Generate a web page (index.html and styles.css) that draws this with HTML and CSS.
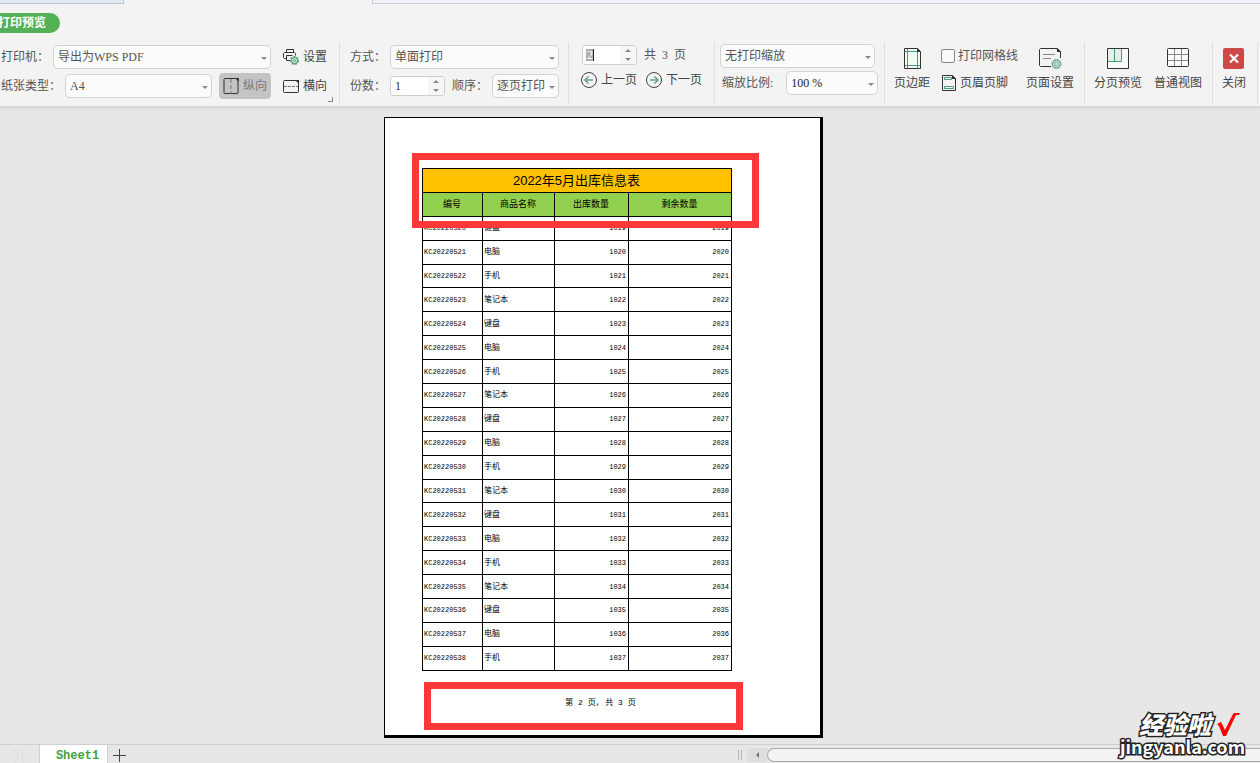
FILE: index.html
```html
<!DOCTYPE html>
<html lang="zh-CN">
<head>
<meta charset="utf-8">
<title>打印预览</title>
<link rel="stylesheet" href="styles.css">
</head>
<body>
<div class="app">
  <header class="top">
    <div class="doc-tabs"><span class="doc-tab"></span><span class="doc-tab-active"></span><span class="doc-rest"></span></div>
    <h1 class="pill">打印预览</h1>
    <div class="toolbar">
      <section class="group printer">
        <div class="rows">
          <div class="row">
            <label class="caption" for="printer">打印机：</label>
            <span class="select grow"><select id="printer"><option>导出为WPS PDF</option></select></span>
          </div>
          <div class="row">
            <label class="caption" for="paper">纸张类型：</label>
            <span class="select grow"><select id="paper"><option>A4</option></select></span>
            <button class="tool pressed" type="button">
              <svg class="i16" viewBox="0 0 16 16"><rect x="1" y=".5" width="14" height="15" rx="1" fill="none" stroke="#333"/><path d="M12 0h4v4z" fill="#333"/><path d="M8 1v15" stroke="#777" stroke-dasharray="4 2"/></svg>纵向</button>
          </div>
        </div>
        <div class="rows">
          <button class="tool line" type="button">
            <svg class="i16" viewBox="0 0 16 16"><path d="M3.500 3.500V.5h7v3M3.500 9.500h-2l-1-1v-4l1-1h10l1 1v2M3.500 6.500h6M3.500 6.500v5h4" fill="none" stroke="#333"/><g stroke="#4f9b70" fill="#d9ebe0"><circle cx="11.500" cy="11.500" r="3.500" stroke-dasharray="2 1" stroke-width="2"/><circle cx="11.500" cy="11.500" r="3"/><circle cx="11.500" cy="11.500" r="1"/></g></svg>设置</button>
          <button class="tool line" type="button">
            <svg class="i16" viewBox="0 0 16 16"><rect x=".5" y="2.500" width="15" height="12" rx="1" fill="none" stroke="#333"/><path d="M12 2h4v4z" fill="#333"/><path d="M1 8.500h14" stroke="#777" stroke-dasharray="3 1"/></svg>横向</button>
        </div>
        <span class="corner"></span>
      </section>

      <section class="group mode">
        <div class="rows">
          <div class="row">
            <label class="caption" for="side">方式：</label>
            <span class="select grow"><select id="side"><option>单面打印</option></select></span>
          </div>
          <div class="row">
            <label class="caption" for="copies">份数：</label>
            <span class="spin"><input id="copies" type="text" value="1"><span class="steps"><button type="button" aria-label="增加"></button><button class="down" type="button" aria-label="减少"></button></span></span>
            <label class="caption order" for="order">顺序：</label>
            <span class="select grow"><select id="order"><option>逐页打印</option></select></span>
          </div>
        </div>
      </section>

      <section class="group pager">
        <div class="rows tight">
          <div class="row page-row">
            <span class="spin current"><input id="page" type="text" value="2" aria-label="页码"><span class="steps"><button type="button" aria-label="增加"></button><button class="down" type="button" aria-label="减少"></button></span></span>
            <span class="total"><span>共</span><span>3</span><span>页</span></span>
          </div>
          <div class="row nav-row">
            <button class="tool nav" type="button"><svg class="i18" viewBox="0 0 18 18"><circle cx="9" cy="9" r="7.500" fill="none" stroke="#444"/><path d="M13 9H5M8.500 5.500L5 9l3.500 3.500" fill="none" stroke="#65a582" stroke-width="1.500"/></svg>上一页</button>
            <button class="tool nav" type="button"><svg class="i18" viewBox="0 0 18 18"><circle cx="9" cy="9" r="7.500" fill="none" stroke="#444"/><path d="M5 9h8M9.500 5.500L13 9l-3.500 3.500" fill="none" stroke="#65a582" stroke-width="1.500"/></svg>下一页</button>
          </div>
        </div>
      </section>

      <section class="group zoom">
        <div class="rows tight">
          <div class="row"><span class="select fit"><select aria-label="打印缩放"><option>无打印缩放</option></select></span></div>
          <div class="row">
            <label class="caption" for="ratio">缩放比例:</label>
            <span class="select grow ratio"><select id="ratio"><option>100 %</option></select></span>
          </div>
        </div>
      </section>

      <section class="group setup">
        <button class="big" type="button"><svg class="i24" viewBox="0 0 24 24"><path d="M4.500 1.500h13l3 3v17h-16z" fill="#f4faf6" stroke="#333"/><path d="M17 1v4h4z" fill="#333"/><path d="M7.500 2v19M17.500 5v16M5 4.500h12M5 18.500h15" stroke="#4f9b70"/></svg>页边距</button>
        <div class="rows checks">
          <label class="check"><input type="checkbox">打印网格线</label>
          <button class="tool header-btn" type="button"><svg class="i16" viewBox="0 0 16 16"><path d="M1.500.5h10l3 3v12h-13z" fill="none" stroke="#333"/><path d="M11 0v4h4z" fill="#333"/><path d="M3.500 2.500h7v2h-7zM3.500 11.500h9v2h-9z" fill="none" stroke="#4f9b70"/></svg>页眉页脚</button>
        </div>
        <button class="big" type="button"><svg class="i24" viewBox="0 0 24 24"><path d="M13 19.500H2.500l-1-1v-16l1-1h17l3 3V11" fill="none" stroke="#333"/><path d="M19 1v4h4z" fill="#333"/><path d="M5 7.500h12M5 11.500h8" stroke="#888"/><g fill="#d9ebe0" stroke="#65a582"><circle cx="18.500" cy="17" r="4.500" stroke-dasharray="2.500 1"/><circle cx="18.500" cy="17" r="4"/><circle cx="18.500" cy="17" r="2"/></g></svg>页面设置</button>
      </section>

      <section class="group views">
        <button class="big" type="button"><svg class="i24" viewBox="0 0 24 24"><path d="M1.500 1.500h21v20h-21z" fill="#fafafa" stroke="#333"/><path d="M2 2h14v12.500H2z" fill="#e5eee8"/><path d="M8.500 2v12M2 14.500h13.500V2" fill="none" stroke="#4f9b70"/></svg>分页预览</button>
        <button class="big" type="button"><svg class="i24" viewBox="0 0 24 24"><rect x="1.500" y="1.500" width="21" height="18" rx="1" fill="#fafafa" stroke="#333"/><path d="M8.500 2v17M15.500 2v17M2 7.500h20M2 13.500h20" stroke="#888"/></svg>普通视图</button>
      </section>

      <section class="group close">
        <button class="big" type="button"><svg class="i24" viewBox="0 0 24 24"><rect x="1" y="1" width="21" height="21" rx="2" fill="#cf4848"/><path d="M8 7.500l8 8M16 7.500l-8 8" stroke="#fff" stroke-width="2.200"/></svg>关闭</button>
      </section>
    </div>
  </header>

  <main class="stage">
    <article class="paper">
      <table class="sheet">
        <colgroup><col class="c1"><col class="c2"><col class="c3"><col class="c4"></colgroup>
        <tbody>
          <tr class="title"><th colspan="4">2022年5月出库信息表</th></tr>
          <tr class="head"><th>编号</th><th>商品名称</th><th>出库数量</th><th>剩余数量</th></tr>
          <tr><td>KC20220520</td><td>键盘</td><td>1019</td><td>2019</td></tr>
          <tr><td>KC20220521</td><td>电脑</td><td>1020</td><td>2020</td></tr>
          <tr><td>KC20220522</td><td>手机</td><td>1021</td><td>2021</td></tr>
          <tr><td>KC20220523</td><td>笔记本</td><td>1022</td><td>2022</td></tr>
          <tr><td>KC20220524</td><td>键盘</td><td>1023</td><td>2023</td></tr>
          <tr><td>KC20220525</td><td>电脑</td><td>1024</td><td>2024</td></tr>
          <tr><td>KC20220526</td><td>手机</td><td>1025</td><td>2025</td></tr>
          <tr><td>KC20220527</td><td>笔记本</td><td>1026</td><td>2026</td></tr>
          <tr><td>KC20220528</td><td>键盘</td><td>1027</td><td>2027</td></tr>
          <tr><td>KC20220529</td><td>电脑</td><td>1028</td><td>2028</td></tr>
          <tr><td>KC20220530</td><td>手机</td><td>1029</td><td>2029</td></tr>
          <tr><td>KC20220531</td><td>笔记本</td><td>1030</td><td>2030</td></tr>
          <tr><td>KC20220532</td><td>键盘</td><td>1031</td><td>2031</td></tr>
          <tr><td>KC20220533</td><td>电脑</td><td>1032</td><td>2032</td></tr>
          <tr><td>KC20220534</td><td>手机</td><td>1033</td><td>2033</td></tr>
          <tr><td>KC20220535</td><td>笔记本</td><td>1034</td><td>2034</td></tr>
          <tr><td>KC20220536</td><td>键盘</td><td>1035</td><td>2035</td></tr>
          <tr><td>KC20220537</td><td>电脑</td><td>1036</td><td>2036</td></tr>
          <tr><td>KC20220538</td><td>手机</td><td>1037</td><td>2037</td></tr>
        </tbody>
      </table>
      <p class="page-no">第 2 页, 共 3 页</p>
      <span class="mark-box mark-top"></span>
      <span class="mark-box mark-bottom"></span>
    </article>
  </main>

  <footer class="bottom">
    <div class="sheet-nav"><svg class="last" viewBox="0 0 12 12"><path d="M2 0l5 6-5 6M10.500 0v12" fill="none" stroke="#d8d8d8"/></svg></div>
    <button class="sheet-tab" type="button">Sheet1</button>
    <button class="add" type="button" aria-label="新建"><svg class="plus" viewBox="0 0 14 14"><path d="M7.500 1v13M1 7.500h13" stroke="#3b4652"/></svg></button>
    <div class="scroll"><span class="grip"></span><button class="arrow" type="button" aria-label="向左"></button><span class="thumb"></span></div>
  </footer>

  <div class="watermark">
    <div class="wm-line">经验啦<svg class="tick" viewBox="0 0 24 24"><path d="M1 12l4-2 4 8L17 2l1-1h6l-1 2h-3L10 24H7L3 14z" fill="#f00" stroke="none"/></svg></div>
    <div class="wm-url">jingyanla.com</div>
  </div>
</div>
</body>
</html>
```

FILE: styles.css
```css
* { box-sizing: border-box; }
html, body { height: 100%; margin: 0; }
body {
  overflow: hidden;
  background: #e7e7e7;
  color: #555;
  font: 12px/16px "Liberation Serif", "Noto Sans CJK SC", serif;
}
button, input, select { font: inherit; color: inherit; margin: 0; }
button { background: none; border: 0; padding: 0; }
svg { display: block; flex: none; }

.app { position: relative; display: flex; flex-direction: column; height: 100vh; }

.top { background: #f3f3f3; border-bottom: 1px solid #d6d6d6; box-shadow: 0 1px 3px #d0d0d0; z-index: 1; }
.doc-tabs { display: flex; height: 4px; }
.doc-tab { width: 124px; background: #e3e8f2; border: solid #bcc3d2; border-width: 0 1px 1px 0; }
.doc-tab-active { width: 248px; }
.doc-rest { flex: 1; background: #f3f4f9; border: solid #c8ccda; border-width: 0 0 1px 1px; }
.pill {
  width: 68px; height: 20px; margin: 9px 0 0 -8px; padding-left: 6px;
  border-radius: 10px; background: #54b054; color: #fff;
  font-size: 12px; line-height: 20px; white-space: nowrap;
}

.toolbar { display: flex; height: 73px; padding: 9px 0 2px; white-space: nowrap; }
.group { position: relative; display: flex; border-right: 1px solid #e0e0e0; padding-top: 2px; flex: none; }
.rows { display: flex; flex-direction: column; gap: 3px; }
.row { display: flex; align-items: center; height: 26px; }
.tight { gap: 1px; }
.grow { flex: 1; }

.printer { width: 340px; padding-left: 1px; gap: 12px; }
.printer > .rows:first-child { width: 270px; }
.mode { width: 229px; padding: 2px 9px 0 10px; }
.mode > .rows { flex: 1; }
.pager { width: 146px; padding-left: 11px; }
.zoom { width: 170px; padding: 1px 6px 0 5px; }
.zoom > .rows { flex: 1; }
.setup { width: 200px; padding-left: 9px; gap: 11px; }
.views { width: 128px; padding-left: 9px; gap: 12px; }
.close { width: 45px; padding-left: 9px; }

.caption { padding-right: 4px; }
.zoom .caption { padding: 0 13px 0 2px; }
.order { padding-left: 7px; }

.select { position: relative; height: 24px; border: 1px solid #d2d2d2; border-radius: 5px; background: #fbfbfb; min-width: 0; }
.select select { appearance: none; width: 100%; height: 100%; padding: 0 12px 0 4px; border: 0; background: none; outline: 0; }
.select::after, .steps button::before { content: ""; border: 3px solid transparent; border-top-color: #888; border-bottom: 0; }
.select::after { position: absolute; right: 3px; top: 11px; }
.select.fit { width: 155px; }
.ratio { color: #222; }

.spin { display: flex; width: 55px; height: 20px; border: 1px solid #cdcdcd; border-radius: 3px; background: #fff; }
.spin input { width: 37px; border: 0; padding: 0 4px; background: none; color: #333; outline: 0; }
.spin.current input {
  color: #fff;
  background: linear-gradient(90deg, #b0b0b0 7px, #222 7px) 3px 3px / 8px 12px no-repeat;
}
.steps { display: flex; flex-direction: column; flex: 1; background: #f6f6f6; }
.steps button { flex: 1; display: flex; align-items: center; justify-content: center; }
.steps button::before { transform: rotate(180deg); }
.steps .down::before { transform: none; }

.tool { display: flex; align-items: center; gap: 4px; color: #444; }
.pressed { width: 52px; height: 26px; margin-left: 7px; padding-left: 4px; border-radius: 4px; background: #c4c4c4; color: #777; }
.line { height: 26px; }
.i16 { width: 16px; height: 16px; }
.i18 { width: 18px; height: 18px; }
.i24 { width: 24px; height: 24px; }
.corner { position: absolute; right: 6px; bottom: 2px; width: 5px; height: 5px; border: solid #888; border-width: 0 1px 1px 0; }

.page-row { height: 22px; padding-left: 2px; }
.total { display: flex; gap: 6px; padding-left: 7px; }
.nav-row { gap: 8px; }
.nav { gap: 3px; }

.big { display: flex; flex-direction: column; align-items: center; justify-content: flex-start; gap: 4px; height: 50px; padding-top: 3px; color: #444; }
.checks { gap: 2px; }
.check { display: flex; align-items: center; gap: 3px; height: 24px; }
.check input { appearance: none; width: 14px; height: 14px; margin: 0; border: 1px solid #8a8a8a; border-radius: 2px; background: #fafafa; }
.header-btn { height: 26px; gap: 3px; }
.checks + .big { margin-left: -3px; }

.stage { flex: 1; display: flex; justify-content: center; align-items: flex-start; padding: 10px 53px 0 0; min-height: 0; }
.paper {
  position: relative; flex: none; width: 439px; padding: 50px 88px 26px 37px;
  border: solid #000; border-width: 1px 3px 3px 1px; background: #fff; color: #000;
}
.sheet { width: 310px; height: 503px; table-layout: fixed; border-collapse: collapse; }
.sheet tr { height: 23px; }
.c1 { width: 60px; }
.c2 { width: 72px; }
.c3 { width: 74px; }
.sheet th, .sheet td { border: 1px solid #000; padding: 0 2px 0 1px; line-height: 10px; font-size: 8px; font-weight: 400; overflow: hidden; }
.sheet .title th { background: #ffc000; padding-top: 2px; font: 13px/16px "Liberation Sans", "Noto Sans CJK SC", sans-serif; }
.sheet .head th { background: #92d050; font-size: 9px; }
.sheet td:nth-child(n+3) { text-align: right; }
.sheet td:nth-child(2n+1), .sheet td:nth-child(4) { font-family: "Liberation Mono", monospace; font-size: 7px; }
.page-no { margin: 26px 0 0; padding-left: 47px; text-align: center; font: 8px/12px "Liberation Mono", "Noto Sans CJK SC", monospace; }
.mark-box { position: absolute; border: 7px solid #fc3838; }
.mark-top { left: 27px; top: 35px; width: 347px; height: 75px; }
.mark-bottom { left: 39px; top: 564px; width: 319px; height: 48px; }

.bottom { display: flex; height: 19px; flex: none; border-top: 1px solid #cfcfcf; overflow: hidden; }
.sheet-nav { width: 40px; padding: 5px 0 0 12px; border-right: 1px solid #cfcfcf; }
.last { width: 12px; height: 12px; }
.sheet-tab { width: 67px; background: #fff; color: #40a440; font: bold 12px/14px "Liberation Mono", monospace; padding: 4px 0 0 8px; }
.add { padding: 2px 5px 0 4px; border-left: 1px solid #cfcfcf; }
.plus { width: 14px; height: 14px; }
.scroll { display: flex; flex: 0 0 522px; margin-left: auto; padding-top: 3px; }
.grip { width: 4px; height: 10px; margin: 2px 5px 0 0; border: solid #b5b5b5; border-width: 0 1px; }
.arrow { display: flex; align-items: center; justify-content: center; width: 20px; height: 14px; background: #dedede; }
.arrow::before { content: ""; border: 3px solid transparent; border-right-color: #777; border-left: 0; }
.thumb { flex: 1; height: 14px; border: 1px solid #a9a9a9; border-right: 0; border-radius: 7px 0 0 7px; background: #f3f3f3; }

.watermark {
  position: absolute; right: 15px; bottom: 7px; z-index: 2;
  color: #fff; font: 900 24px/24px "Noto Sans CJK SC", sans-serif;
  -webkit-text-stroke: 3px #222; paint-order: stroke fill;
}
.wm-line { display: flex; align-items: center; gap: 5px; padding-left: 19px; font-style: italic; }
.wm-url { font: bold 18px/20px "Noto Sans CJK SC", sans-serif; }
.tick { width: 24px; height: 24px; }
```
